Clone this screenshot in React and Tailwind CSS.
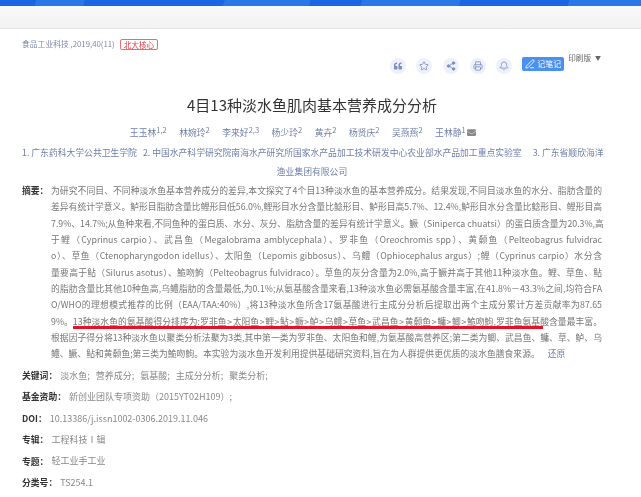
import { Star, Share2, Printer, Bell, PenLine } from "lucide-react";
import { FaQuoteLeft, FaEnvelope } from "react-icons/fa";

const authors = [
    { name: "王玉林", sup: "1,2" },
    { name: "林婉玲", sup: "2" },
    { name: "李来好", sup: "2,3" },
    { name: "杨少玲", sup: "2" },
    { name: "黄卉", sup: "2" },
    { name: "杨贤庆", sup: "2" },
    { name: "吴燕燕", sup: "2" },
    { name: "王林静", sup: "1" },
];

const abstractLines = [
    "为研究不同目、不同种淡水鱼基本营养成分的差异,本文探究了4个目13种淡水鱼的基本营养成分。结果发现,不同目淡水鱼的水分、脂肪含量的",
    "差异有统计学意义。鲈形目脂肪含量比鲤形目低56.0%,鲤形目水分含量比鲶形目、鲈形目高5.7%、12.4%,鲈形目水分含量比鲶形目、鲤形目高",
    "7.9%、14.7%;从鱼种来看,不同鱼种的蛋白质、水分、灰分、脂肪含量的差异有统计学意义。鳜（Siniperca chuatsi）的蛋白质含量为20.3%,高",
    "于鲤（Cyprinus carpio）、武昌鱼（Megalobrama amblycephala）、罗非鱼（Oreochromis spp）、黄颡鱼（Pelteobagrus fulvidrac",
    "o）、草鱼（Ctenopharyngodon idellus）、太阳鱼（Lepomis gibbosus）、乌鳢（Ophiocephalus argus）;鲤（Cyprinus carpio）水分含",
    "量要高于鲇（Silurus asotus）、鮠吻鮈（Pelteobagrus fulvidraco）。草鱼的灰分含量为2.0%,高于鳜并高于其他11种淡水鱼。鲤、草鱼、鲇",
    "的脂肪含量比其他10种鱼高,乌鳢脂肪的含量最低,为0.1%;从氨基酸含量来看,13种淡水鱼必需氨基酸含量丰富,在41.8%－43.3%之间,均符合FA",
    "O/WHO的理想模式推荐的比例（EAA/TAA:40%）,将13种淡水鱼所含17氨基酸进行主成分分析后提取出两个主成分累计方差贡献率为87.65",
];

const keywords = ["淡水鱼;", "营养成分;", "氨基酸;", "主成分分析;", "聚类分析;"];

const ToolButton = ({ children }) => (
    <span className="flex h-4 w-4 items-center justify-center rounded-full bg-[#eef1f9] text-[#7a8dc4]">{children}</span>
);

const MetaRow = ({ label, children }) => (
    <div className="flex h-[21.4px] items-center gap-[3px]">
        <b className="text-[#333]">{label}</b>
        <span className="text-[9px] text-[#888]">{children}</span>
    </div>
);

export default function App() {
    return (
        <div className="h-[497px] overflow-hidden bg-white text-[8.8px] blur-[0.4px] [font-family:'Noto_Sans_CJK_SC','Noto_Sans',sans-serif]">
            <div className="h-[6px] bg-[linear-gradient(105deg,#1b66e2_35px,#2a78e8_35px,#2a78e8_82px,#1b66e2_82px,#1b66e2_217px,#2a78e8_217px,#2a78e8_300px,#1b66e2_300px,#1b66e2_350px,#2a78e8_350px,#2a78e8_445px,#1b66e2_445px,#1b66e2_550px,#2a78e8_550px)]"></div>
            <div className="h-[23px] border-b border-[#e6e6e6] bg-gradient-to-b from-[#f9f9f9] to-[#f2f2f2]"></div>

            <div className="ml-[22px] w-[580px]">
                <div className="flex h-[20px] items-center pt-[10px]">
                    <span className="text-[7.8px] text-[#7d88a8]">食品工业科技 ,2019,40(11)</span>
                    <span className="ml-[5px] rounded-[2px] border border-[#ef6b6b] px-[3px] text-[7.6px] leading-[9px] text-[#e5383b]">北大核心</span>
                </div>

                <div className="mt-[8px] flex items-start justify-end pr-[1px]">
                    <div className="mt-[1px] flex items-center gap-[10.6px]">
                        <ToolButton><FaQuoteLeft size={8} /></ToolButton>
                        <ToolButton><Star size={10} /></ToolButton>
                        <ToolButton><Share2 size={10} fill="currentColor" /></ToolButton>
                        <ToolButton><Printer size={10} /></ToolButton>
                        <ToolButton><Bell size={10} /></ToolButton>
                    </div>
                    <span className="ml-[10px] flex h-[14px] w-[42px] items-center justify-center gap-[2px] rounded-[2px] bg-[#4a90f0] text-[8px] text-white">
                        <PenLine size={10} />记笔记
                    </span>
                    <span className="ml-[4px] -mt-[5px] flex items-center gap-[4px] text-[7.6px] text-[#666]">
                        印刷版<span className="text-[6px]">▼</span>
                    </span>
                </div>

                <h1 className="mt-[19px] text-center text-[15px] leading-[24px] font-normal text-[#333]">4目13种淡水鱼肌肉基本营养成分分析</h1>

                <div className="mt-[9px] flex items-center justify-center gap-[12.5px] pr-[18px] text-[#6f7ea8]">
                    {authors.map(author => (
                        <span key={author.name}>
                            {author.name}<sup className="top-[-3px] align-baseline text-[7.5px]">{author.sup}</sup>
                        </span>
                    ))}
                    <FaEnvelope size={9} className="-ml-[11px] text-[#888]" />
                </div>

                <div className="mt-[4px] text-center leading-[19px] text-[#6f7ea8]">
                    <p className="flex whitespace-nowrap">
                        <span>1. 广东药科大学公共卫生学院</span>
                        <span className="ml-[6px]">2. 中国水产科学研究院南海水产研究所国家水产品加工技术研发中心农业部水产品加工重点实验室</span>
                        <span className="ml-[11px]">3. 广东省顺欣海洋</span>
                    </p>
                    <p>渔业集团有限公司</p>
                </div>

                <div className="mt-[2px] flex leading-[16.3px]">
                    <b className="w-[29px] shrink-0 text-[#333]">摘要：</b>
                    <div className="w-[551px] text-[#777]">
                        {abstractLines.map(line => (
                            <p key={line} className="whitespace-nowrap [text-align-last:justify]">{line}</p>
                        ))}
                        <p className="relative whitespace-nowrap [text-align-last:justify]">
                            9%。13种淡水鱼的氨基酸得分排序为:罗非鱼&#8202;&gt;&#8202;太阳鱼&#8202;&gt;&#8202;鲤&#8202;&gt;&#8202;鲇&#8202;&gt;&#8202;鳜&#8202;&gt;&#8202;鲈&#8202;&gt;&#8202;乌鳢&#8202;&gt;&#8202;草鱼&#8202;&gt;&#8202;武昌鱼&#8202;&gt;&#8202;黄颡鱼&#8202;&gt;&#8202;鳙&#8202;&gt;&#8202;鲫&#8202;&gt;&#8202;鮠吻鮈,罗非鱼氨基酸含量最丰富。
                            <span className="absolute top-[12.5px] left-[22px] h-[2.5px] w-[470px] bg-[#e8112a]"></span>
                        </p>
                        <p className="whitespace-nowrap [text-align-last:justify]">根据因子得分将13种淡水鱼以聚类分析法聚为3类,其中第一类为罗非鱼、太阳鱼和鲤,为氨基酸高营养区;第二类为鲫、武昌鱼、鳙、草、鲈、乌</p>
                        <p className="whitespace-nowrap">
                            鳢、鳜、鲇和黄颡鱼;第三类为鮠吻鮈。本实验为淡水鱼开发利用提供基础研究资料,旨在为人群提供更优质的淡水鱼膳食来源。
                            <span className="ml-[8px] text-[#6f7ea8]">还原</span>
                        </p>
                    </div>
                </div>

                <div className="mt-[2.5px]">
                    <MetaRow label="关键词：">
                        {keywords.map(word => <span key={word} className="mr-[6px]">{word}</span>)}
                    </MetaRow>
                    <MetaRow label="基金资助：">新创业团队专项资助（2015YT02H109）;</MetaRow>
                    <MetaRow label="DOI：">10.13386/j.issn1002-0306.2019.11.046</MetaRow>
                    <MetaRow label="专辑：">工程科技Ⅰ辑</MetaRow>
                    <MetaRow label="专题：">轻工业手工业</MetaRow>
                    <MetaRow label="分类号：">TS254.1</MetaRow>
                </div>
            </div>
        </div>
    );
}
